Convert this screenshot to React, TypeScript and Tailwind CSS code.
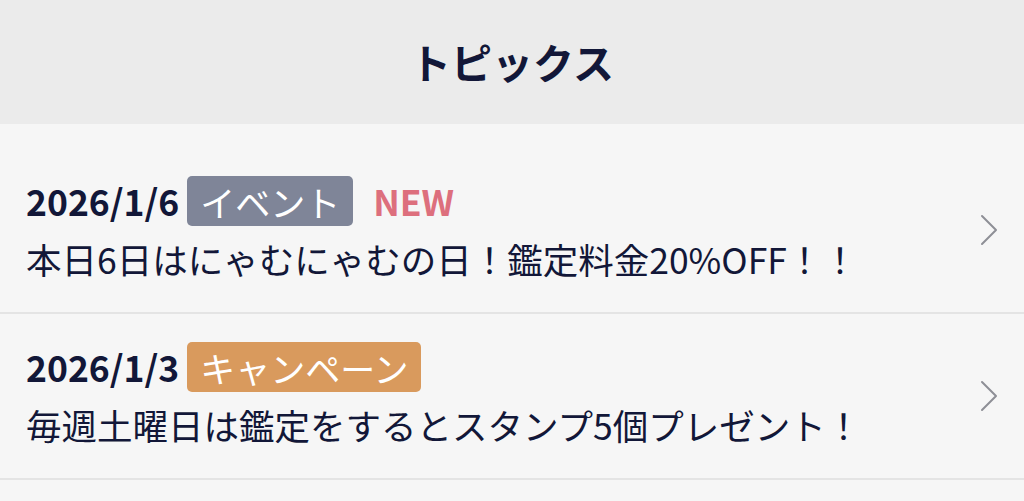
import { ReactNode } from "react";

interface Topic {
  date: string;
  label: string;
  labelClass: string;
  isNew?: boolean;
  title: string;
}

const topics: Topic[] = [
  {
    date: "2026/1/6",
    label: "イベント",
    labelClass: "bg-[#7f8598]",
    isNew: true,
    title: "本日6日はにゃむにゃむの日！鑑定料金20%OFF！！",
  },
  {
    date: "2026/1/3",
    label: "キャンペーン",
    labelClass: "bg-[#d99a5d]",
    title: "毎週土曜日は鑑定をするとスタンプ5個プレゼント！",
  },
];

function Chevron() {
  return (
    <svg width="18" height="32" viewBox="0 0 18 32" fill="none" className="shrink-0">
      <polyline points="2,2 16,16 2,30" stroke="#8e8f96" strokeWidth="2" strokeLinecap="round" strokeLinejoin="round" />
    </svg>
  );
}

function Row({ topic }: { topic: Topic }): ReactNode {
  return (
    <div className="flex items-center px-[26px] py-[28px] border-b-2 border-[#e4e4e4]">
      <div className="flex-1 min-w-0">
        <div className="flex items-center h-[50px]">
          <span className="text-[35.5px] font-bold leading-none text-[#121738]">{topic.date}</span>
          <span
            className={`ml-2 h-[50px] px-[13px] rounded-[5px] flex items-center text-[35px] leading-none text-white ${topic.labelClass}`}
          >
            {topic.label}
          </span>
          {topic.isNew && (
            <span className="ml-5 text-[35.5px] font-bold leading-none text-[#dd6f7d]">NEW</span>
          )}
        </div>
        <p className="mt-2 text-[35.5px] leading-[50px] text-[#121738] whitespace-nowrap">{topic.title}</p>
      </div>
      <Chevron />
    </div>
  );
}

export default function App() {
  return (
    <div
      className="min-h-screen bg-[#f6f6f6]"
      style={{ fontFamily: '"Noto Sans CJK JP", "Noto Sans", sans-serif' }}
    >
      <header className="h-[124px] bg-[#ebebeb] flex items-center justify-center">
        <h1 className="text-[41px] font-bold text-[#121738]">トピックス</h1>
      </header>
      <div className="pt-6">
        {topics.map((t) => (
          <Row key={t.date} topic={t} />
        ))}
      </div>
    </div>
  );
}
